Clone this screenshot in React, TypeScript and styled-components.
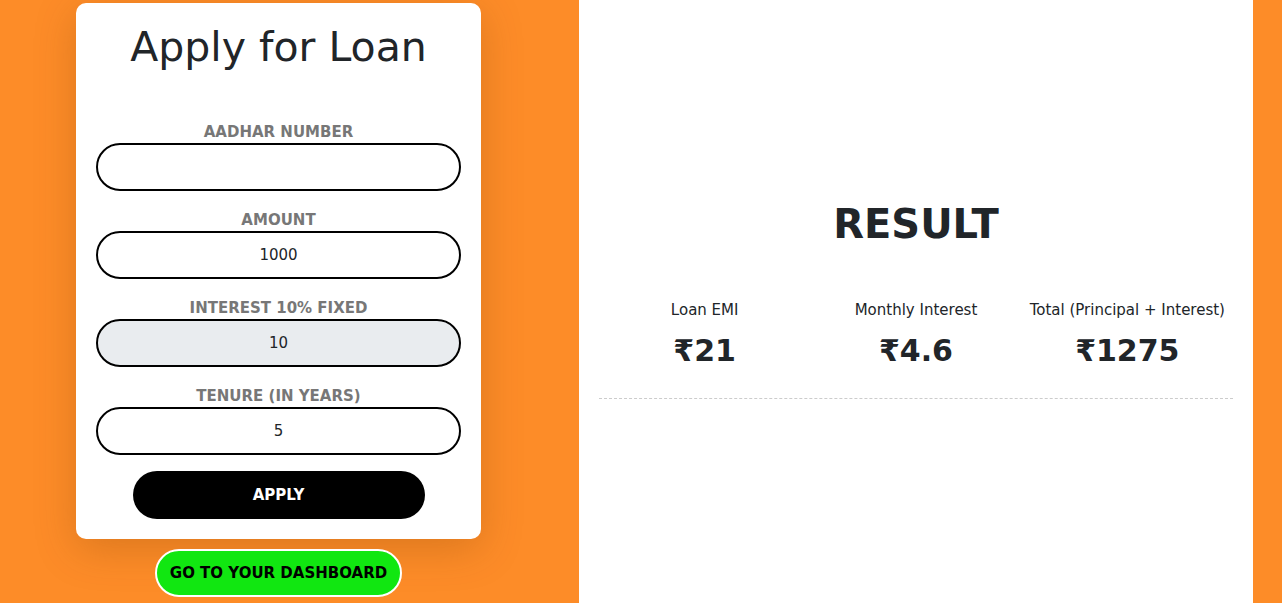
import styled, { createGlobalStyle } from 'styled-components';

const GlobalStyle = createGlobalStyle`
	html, body {
		margin: 0;
		padding: 0;
		background: #fd8c28;
		font-family: 'DejaVu Sans', 'Noto Sans', sans-serif;
		color: #212529;
	}
`;

const Page = styled.div`
	display: flex;
	flex-direction: row;
	height: 603px;
	overflow: hidden;
`;

const LeftColumn = styled.div`
	display: flex;
	flex-direction: column;
	align-items: center;
	width: 557px;
	padding-top: 3px;
	box-sizing: border-box;
`;

const Card = styled.form`
	display: flex;
	flex-direction: column;
	align-items: center;
	width: 405px;
	box-sizing: border-box;
	padding: 20px 20px 20px;
	background: #ffffff;
	border-radius: 10px;
	box-shadow: 0 10px 40px rgba(120, 60, 0, 0.25);
`;

const Title = styled.h1`
	margin: 0 0 50px;
	font-size: 41px;
	font-weight: 400;
	line-height: 48px;
	color: #212529;
`;

const Field = styled.div`
	display: flex;
	flex-direction: column;
	align-items: center;
	width: 100%;
	margin-bottom: 18px;
`;

const Label = styled.label`
	font-size: 15px;
	font-weight: 700;
	line-height: 22px;
	color: #777777;
	text-transform: uppercase;
`;

const Input = styled.input<{ $disabled?: boolean }>`
	width: 100%;
	height: 48px;
	box-sizing: border-box;
	border: 2px solid #000000;
	border-radius: 24px;
	background: ${(p) => (p.$disabled ? '#e9ecef' : '#ffffff')};
	font-family: inherit;
	font-size: 15px;
	color: #212529;
	text-align: center;
	outline: none;
`;

const ApplyButton = styled.button`
	width: 292px;
	height: 48px;
	margin-top: -2px;
	border: none;
	border-radius: 24px;
	background: #000000;
	color: #ffffff;
	font-family: inherit;
	font-size: 15px;
	font-weight: 700;
`;

const DashboardButton = styled.button`
	margin-top: 10px;
	height: 48px;
	padding: 0 13px;
	border: 2px solid #ffffff;
	border-radius: 24px;
	background: #11e711;
	color: #000000;
	font-family: inherit;
	font-size: 15px;
	font-weight: 700;
`;

const Spacer = styled.div`
	width: 22px;
`;

const ResultPanel = styled.div`
	display: flex;
	flex-direction: column;
	justify-content: center;
	width: 674px;
	padding: 0 20px 4px;
	box-sizing: border-box;
	background: #ffffff;
`;

const ResultTitle = styled.h2`
	margin: 0 0 51px;
	text-align: center;
	font-size: 40px;
	font-weight: 700;
	line-height: 48px;
	color: #212529;
`;

const Stats = styled.div`
	display: grid;
	grid-template-columns: repeat(3, 1fr);
	padding-bottom: 29px;
	border-bottom: 1px dashed #cccccc;
`;

const Stat = styled.div`
	display: flex;
	flex-direction: column;
	align-items: center;
`;

const StatLabel = styled.span`
	font-size: 15px;
	line-height: 22px;
	color: #212529;
`;

const StatValue = styled.span`
	margin-top: 12px;
	font-size: 30px;
	font-weight: 700;
	line-height: 36px;
	color: #212529;
`;

const fields = [
	{ label: 'Aadhar Number', value: '' },
	{ label: 'Amount', value: '1000' },
	{ label: 'Interest 10% Fixed', value: '10', disabled: true },
	{ label: 'Tenure (in years)', value: '5' },
];

const stats = [
	{ label: 'Loan EMI', value: '₹21' },
	{ label: 'Monthly Interest', value: '₹4.6' },
	{ label: 'Total (Principal + Interest)', value: '₹1275' },
];

const App = () => {
	return (
		<>
			<GlobalStyle />
			<Page>
				<LeftColumn>
					<Card onSubmit={(e) => e.preventDefault()}>
						<Title>Apply for Loan</Title>
						{fields.map((f) => (
							<Field key={f.label}>
								<Label>{f.label}</Label>
								<Input defaultValue={f.value} readOnly={f.disabled} $disabled={f.disabled} />
							</Field>
						))}
						<ApplyButton type='submit'>APPLY</ApplyButton>
					</Card>
					<DashboardButton type='button'>GO TO YOUR DASHBOARD</DashboardButton>
				</LeftColumn>
				<Spacer />
				<ResultPanel>
					<ResultTitle>RESULT</ResultTitle>
					<Stats>
						{stats.map((s) => (
							<Stat key={s.label}>
								<StatLabel>{s.label}</StatLabel>
								<StatValue>{s.value}</StatValue>
							</Stat>
						))}
					</Stats>
				</ResultPanel>
			</Page>
		</>
	);
};

export default App;
